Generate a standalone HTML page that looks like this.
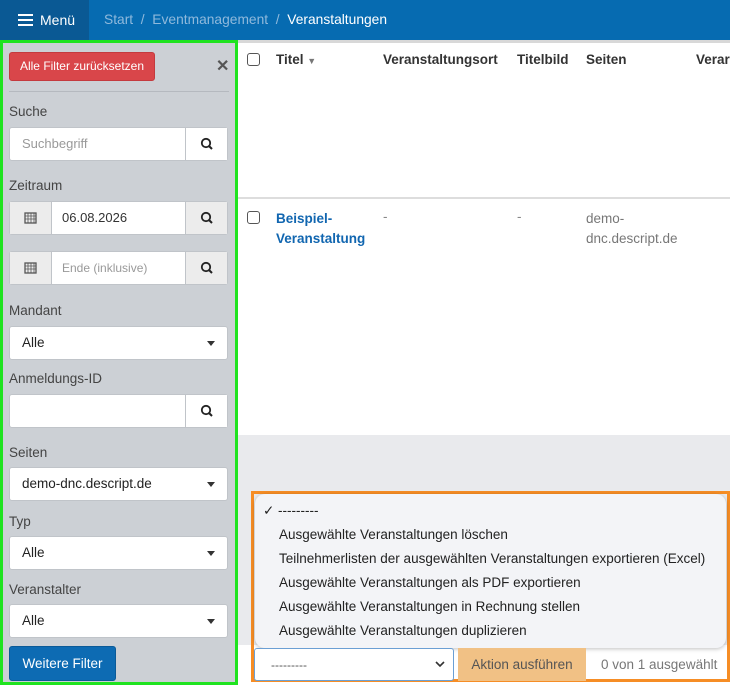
<!DOCTYPE html>
<html><head><meta charset="utf-8"><style>
*{box-sizing:border-box;margin:0;padding:0}
body{width:730px;height:685px;overflow:hidden;font-family:"Liberation Sans",sans-serif;font-size:13.5px;color:#333;background:#fff;position:relative}
.wrap{position:absolute;left:0;top:0;width:730px;height:685px;overflow:hidden}
.nav{position:absolute;left:0;top:0;width:730px;height:40px;background:#066bb1}
.menu{position:absolute;left:0;top:0;width:89px;height:40px;background:#0a5994;color:#fff;font-size:14px;line-height:40px;padding-left:40px}
.burger{position:absolute;left:18px;top:14px;width:15px;height:12px;border-top:2px solid #fff;border-bottom:2px solid #fff}
.burger:after{content:"";position:absolute;left:0;top:3px;width:15px;height:2px;background:#fff}
.crumb{position:absolute;left:104px;top:0;line-height:40px;color:#8fb9dc;font-size:13.8px}
.crumb b{color:#fff;font-weight:normal}
.side{position:absolute;left:0;top:40px;width:238px;height:645px;background:#ccd0d5;border:3px solid #1fe31f}
.abs{position:absolute}
.btnred{left:6px;top:9px;width:146px;height:29px;background:#d9464a;border:1px solid #c43a3e;border-radius:3px;color:#fff;font-size:12px;text-align:center;line-height:27px}
.x{left:213px;top:13px;font-size:16px;color:#555;font-weight:bold}
.hr{left:6px;top:48px;width:220px;height:1px;background:#b5b9bf}
.lbl{font-size:13.5px;color:#444;left:6px}
.inp{left:6px;width:219px;height:34px;background:#fff;border:1px solid #c0c4c9;border-radius:3px}
.inp .t{position:absolute;left:12px;top:0;line-height:32px;font-size:13px;color:#999}
.inp .s{position:absolute;right:0;top:0;width:42px;height:32px;border-left:1px solid #c0c4c9;background:#fff}
.gr{background:#ececec!important}
.inp .c{position:absolute;left:0;top:0;width:42px;height:32px;background:#ececec;border-right:1px solid #c0c4c9}
.sel .t{color:#222;font-size:13.5px}
.caret{position:absolute;right:12px;top:14px;border-left:4px solid transparent;border-right:4px solid transparent;border-top:5px solid #333}
.blue{left:6px;top:603px;width:107px;height:35px;background:#0d6bb3;border:1px solid #0a5a98;border-radius:3px;color:#fff;font-size:13.5px;text-align:center;line-height:33px}
.cb{position:absolute;width:13px;height:13px;border:1px solid #555;border-radius:3px;background:#fff}
.th{font-weight:bold;font-size:13.5px;color:#333;white-space:nowrap}
</style></head><body><div class="wrap">
<div class="nav"><div class="menu"><div class="burger"></div>Menü</div>
<div class="crumb">Start &nbsp;/&nbsp; Eventmanagement &nbsp;/&nbsp; <b>Veranstaltungen</b></div></div>

<div class="side">
<div class="abs btnred">Alle Filter zurücksetzen</div>
<div class="abs x">✕</div>
<div class="abs hr"></div>
<div class="abs lbl" style="top:61px">Suche</div>
<div class="abs inp" style="top:84px"><div class="t">Suchbegriff</div><div class="s"><svg width="42" height="32"><circle cx="20" cy="15" r="4.2" fill="none" stroke="#222" stroke-width="1.8"/><line x1="23" y1="18" x2="26" y2="21" stroke="#222" stroke-width="2"/></svg></div></div>
<div class="abs lbl" style="top:135px">Zeitraum</div>
<div class="abs inp" style="top:158px"><div class="c"><svg width="42" height="32"><rect x="15" y="11" width="11" height="10" fill="none" stroke="#555" stroke-width="1.3"/><path d="M15 14h11M18 11v10M21 11v10M24 11v10M15 17h11" stroke="#555" stroke-width=".8"/></svg></div><div class="t" style="left:52px;color:#333">06.08.2026</div><div class="s gr"><svg width="42" height="32"><circle cx="20" cy="15" r="4.2" fill="none" stroke="#222" stroke-width="1.8"/><line x1="23" y1="18" x2="26" y2="21" stroke="#222" stroke-width="2"/></svg></div></div>
<div class="abs inp" style="top:208px"><div class="c"><svg width="42" height="32"><rect x="15" y="11" width="11" height="10" fill="none" stroke="#555" stroke-width="1.3"/><path d="M15 14h11M18 11v10M21 11v10M24 11v10M15 17h11" stroke="#555" stroke-width=".8"/></svg></div><div class="t" style="left:52px;font-size:12px">Ende (inklusive)</div><div class="s gr"><svg width="42" height="32"><circle cx="20" cy="15" r="4.2" fill="none" stroke="#222" stroke-width="1.8"/><line x1="23" y1="18" x2="26" y2="21" stroke="#222" stroke-width="2"/></svg></div></div>
<div class="abs lbl" style="top:260px">Mandant</div>
<div class="abs inp sel" style="top:283px"><div class="t">Alle</div><div class="caret"></div></div>
<div class="abs lbl" style="top:328px">Anmeldungs-ID</div>
<div class="abs inp" style="top:351px"><div class="s"><svg width="42" height="32"><circle cx="20" cy="15" r="4.2" fill="none" stroke="#222" stroke-width="1.8"/><line x1="23" y1="18" x2="26" y2="21" stroke="#222" stroke-width="2"/></svg></div></div>
<div class="abs lbl" style="top:402px">Seiten</div>
<div class="abs inp sel" style="top:424px"><div class="t">demo-dnc.descript.de</div><div class="caret"></div></div>
<div class="abs lbl" style="top:471px">Typ</div>
<div class="abs inp sel" style="top:493px"><div class="t">Alle</div><div class="caret"></div></div>
<div class="abs lbl" style="top:539px">Veranstalter</div>
<div class="abs inp sel" style="top:561px"><div class="t">Alle</div><div class="caret"></div></div>
<div class="abs blue">Weitere Filter</div>
</div>

<div class="abs" style="left:238px;top:40px;width:492px;height:3px;background:#d8d8d8"></div>
<div class="cb" style="left:247px;top:53px"></div>
<div class="abs th" style="left:276px;top:52px">Titel <span style="font-size:9px;color:#777">▼</span></div>
<div class="abs th" style="left:383px;top:52px">Veranstaltungsort</div>
<div class="abs th" style="left:517px;top:52px">Titelbild</div>
<div class="abs th" style="left:586px;top:52px">Seiten</div>
<div class="abs th" style="left:696px;top:52px">Verar</div>
<div class="abs" style="left:238px;top:197px;width:492px;height:2px;background:#ddd"></div>
<div class="cb" style="left:247px;top:211px"></div>
<div class="abs" style="left:276px;top:209px;color:#1166b0;font-weight:bold;line-height:20px">Beispiel-<br>Veranstaltung</div>
<div class="abs" style="left:383px;top:209px;color:#888">-</div>
<div class="abs" style="left:517px;top:209px;color:#888">-</div>
<div class="abs" style="left:586px;top:209px;color:#777;line-height:20px">demo-<br>dnc.descript.de</div>
<div class="abs" style="left:238px;top:435px;width:492px;height:210px;background:#e9eaed"></div>
<div class="abs" style="left:238px;top:645px;width:492px;height:40px;background:#fff"></div>

<div class="abs" style="left:251px;top:491px;width:479px;height:191px;border:3px solid #f68d25"></div>
<div class="abs" style="left:255px;top:494px;width:471px;height:154px;background:#f3f4f7;border-radius:10px;box-shadow:0 1px 4px rgba(0,0,0,.25);font-size:13.5px;color:#222;white-space:nowrap">
<div class="abs" style="left:8px;top:9px">✓ ---------</div>
<div class="abs" style="left:24px;top:33px">Ausgewählte Veranstaltungen löschen</div>
<div class="abs" style="left:24px;top:57px">Teilnehmerlisten der ausgewählten Veranstaltungen exportieren (Excel)</div>
<div class="abs" style="left:24px;top:81px">Ausgewählte Veranstaltungen als PDF exportieren</div>
<div class="abs" style="left:24px;top:105px">Ausgewählte Veranstaltungen in Rechnung stellen</div>
<div class="abs" style="left:24px;top:129px">Ausgewählte Veranstaltungen duplizieren</div>
</div>
<div class="abs" style="left:254px;top:648px;width:200px;height:33px;border:1px solid #6b9fd4;border-radius:3px;background:#fff;color:#555;padding:9px 16px;font-size:12px">---------<svg style="position:absolute;right:8px;top:12px" width="10" height="7"><path d="M1 1l4 4 4-4" fill="none" stroke="#333" stroke-width="1.6"/></svg></div>
<div class="abs" style="left:458px;top:648px;width:128px;height:33px;background:#f1c185;color:#555;text-align:center;line-height:33px;font-size:13.5px">Aktion ausführen</div>
<div class="abs" style="left:601px;top:657px;color:#777;font-size:13.5px;white-space:nowrap">0 von 1 ausgewählt</div>
</div></body></html>
